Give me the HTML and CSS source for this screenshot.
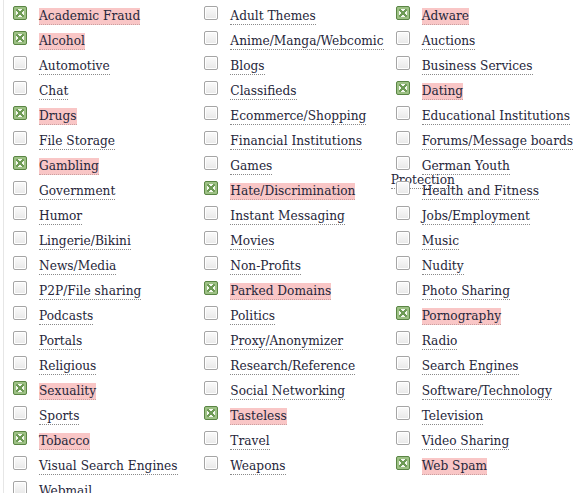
FILE: index.html
```html
<!DOCTYPE html>
<html>
<head>
<meta charset="utf-8">
<link rel="stylesheet" href="styles.css">
</head>
<body>
<ul class="cats">
<li class="item"><span class="box on"></span><span class="lbl on">Academic Fraud</span></li>
<li class="item"><span class="box"></span><span class="lbl">Adult Themes</span></li>
<li class="item"><span class="box on"></span><span class="lbl on">Adware</span></li>
<li class="item"><span class="box on"></span><span class="lbl on">Alcohol</span></li>
<li class="item"><span class="box"></span><span class="lbl">Anime/Manga/Webcomic</span></li>
<li class="item"><span class="box"></span><span class="lbl">Auctions</span></li>
<li class="item"><span class="box"></span><span class="lbl">Automotive</span></li>
<li class="item"><span class="box"></span><span class="lbl">Blogs</span></li>
<li class="item"><span class="box"></span><span class="lbl">Business Services</span></li>
<li class="item"><span class="box"></span><span class="lbl">Chat</span></li>
<li class="item"><span class="box"></span><span class="lbl">Classifieds</span></li>
<li class="item"><span class="box on"></span><span class="lbl on">Dating</span></li>
<li class="item"><span class="box on"></span><span class="lbl on">Drugs</span></li>
<li class="item"><span class="box"></span><span class="lbl">Ecommerce/Shopping</span></li>
<li class="item"><span class="box"></span><span class="lbl">Educational Institutions</span></li>
<li class="item"><span class="box"></span><span class="lbl">File Storage</span></li>
<li class="item"><span class="box"></span><span class="lbl">Financial Institutions</span></li>
<li class="item"><span class="box"></span><span class="lbl">Forums/Message boards</span></li>
<li class="item"><span class="box on"></span><span class="lbl on">Gambling</span></li>
<li class="item"><span class="box"></span><span class="lbl">Games</span></li>
<li class="item"><span class="box"></span><span class="lbl">German Youth Protection</span></li>
<li class="item"><span class="box"></span><span class="lbl">Government</span></li>
<li class="item"><span class="box on"></span><span class="lbl on">Hate/Discrimination</span></li>
<li class="item"><span class="box"></span><span class="lbl">Health and Fitness</span></li>
<li class="item"><span class="box"></span><span class="lbl">Humor</span></li>
<li class="item"><span class="box"></span><span class="lbl">Instant Messaging</span></li>
<li class="item"><span class="box"></span><span class="lbl">Jobs/Employment</span></li>
<li class="item"><span class="box"></span><span class="lbl">Lingerie/Bikini</span></li>
<li class="item"><span class="box"></span><span class="lbl">Movies</span></li>
<li class="item"><span class="box"></span><span class="lbl">Music</span></li>
<li class="item"><span class="box"></span><span class="lbl">News/Media</span></li>
<li class="item"><span class="box"></span><span class="lbl">Non-Profits</span></li>
<li class="item"><span class="box"></span><span class="lbl">Nudity</span></li>
<li class="item"><span class="box"></span><span class="lbl">P2P/File sharing</span></li>
<li class="item"><span class="box on"></span><span class="lbl on">Parked Domains</span></li>
<li class="item"><span class="box"></span><span class="lbl">Photo Sharing</span></li>
<li class="item"><span class="box"></span><span class="lbl">Podcasts</span></li>
<li class="item"><span class="box"></span><span class="lbl">Politics</span></li>
<li class="item"><span class="box on"></span><span class="lbl on">Pornography</span></li>
<li class="item"><span class="box"></span><span class="lbl">Portals</span></li>
<li class="item"><span class="box"></span><span class="lbl">Proxy/Anonymizer</span></li>
<li class="item"><span class="box"></span><span class="lbl">Radio</span></li>
<li class="item"><span class="box"></span><span class="lbl">Religious</span></li>
<li class="item"><span class="box"></span><span class="lbl">Research/Reference</span></li>
<li class="item"><span class="box"></span><span class="lbl">Search Engines</span></li>
<li class="item"><span class="box on"></span><span class="lbl on">Sexuality</span></li>
<li class="item"><span class="box"></span><span class="lbl">Social Networking</span></li>
<li class="item"><span class="box"></span><span class="lbl">Software/Technology</span></li>
<li class="item"><span class="box"></span><span class="lbl">Sports</span></li>
<li class="item"><span class="box on"></span><span class="lbl on">Tasteless</span></li>
<li class="item"><span class="box"></span><span class="lbl">Television</span></li>
<li class="item"><span class="box on"></span><span class="lbl on">Tobacco</span></li>
<li class="item"><span class="box"></span><span class="lbl">Travel</span></li>
<li class="item"><span class="box"></span><span class="lbl">Video Sharing</span></li>
<li class="item"><span class="box"></span><span class="lbl">Visual Search Engines</span></li>
<li class="item"><span class="box"></span><span class="lbl">Weapons</span></li>
<li class="item"><span class="box on"></span><span class="lbl on">Web Spam</span></li>
<li class="item"><span class="box"></span><span class="lbl">Webmail</span></li>
</ul>
</body>
</html>
```
FILE: styles.css
```css
html, body {
  margin: 0;
  padding: 0;
  background: #fff;
  overflow: hidden;
}
.cats {
  list-style: none;
  margin: 0 0 0 3px;
  padding: 0;
  width: 574px;
  border-left: 1px solid #e6e6e6;
  display: grid;
  grid-template-columns: repeat(3, 1fr);
  grid-auto-rows: 25px;
  font-family: "DejaVu Serif", serif;
  font-size: 12.2px;
  color: #26263a;
}
.item {
  padding: 8.5px 0 0 4px;
  line-height: 14px;
  min-width: 0;
}
.box {
  float: left;
  width: 12px;
  height: 12px;
  margin: -2.5px 12px 0 5px;
  border: 1px solid #a5a5a5;
  border-radius: 2px;
  background: linear-gradient(#fbfbfb, #e8e8e8);
  box-shadow: inset 0 0 0 1px #fff;
}
.box.on {
  border-color: #5a8544;
  background: #9dc185;
  box-shadow: none;
  position: relative;
}
.box.on::after {
  content: "";
  position: absolute;
  left: 2px;
  top: 2px;
  width: 8px;
  height: 8px;
  border-radius: 1px;
  background:
    linear-gradient(45deg, transparent 40%, #6d9a55 40%, #6d9a55 60%, transparent 60%),
    linear-gradient(-45deg, transparent 40%, #6d9a55 40%, #6d9a55 60%, transparent 60%),
    #f4f8f0;
}
.lbl {
  border-bottom: 1px dotted #8a8a8a;
  padding: 1px 0;
}
.lbl.on {
  background: #f9c6c6;
  border-bottom-color: #c9a0a0;
}
```
